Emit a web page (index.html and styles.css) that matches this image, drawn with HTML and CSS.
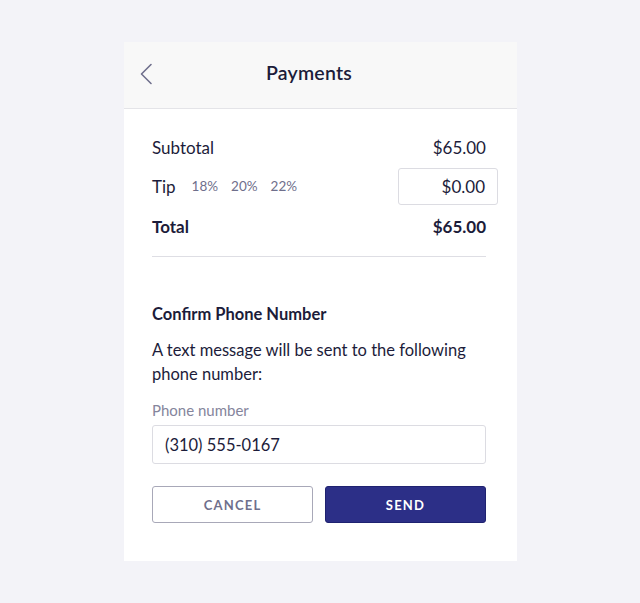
FILE: index.html
```html
<!DOCTYPE html>
<html lang="en">
<head>
  <meta charset="UTF-8">
  <meta name="viewport" content="width=device-width, initial-scale=1.0">
  <title>Payments</title>
  <link rel="stylesheet" href="styles.css">
</head>
<body>
  <div class="card">
    <div class="header">
      <button class="back" aria-label="Back">
        <svg width="14" height="22" viewBox="0 0 14 22"><path d="M12 1.5 L2.5 11 L12 20.5" fill="none" stroke="#6f6f8c" stroke-width="1.6" stroke-linecap="round" stroke-linejoin="round"/></svg>
      </button>
      <h1>Payments</h1>
    </div>

    <div class="content">
      <div class="row">
        <span>Subtotal</span>
        <span>$65.00</span>
      </div>
      <div class="row tip-row">
        <div class="tip">
          <span>Tip</span>
          <span class="pct">18%</span>
          <span class="pct">20%</span>
          <span class="pct">22%</span>
        </div>
        <div class="tip-box">$0.00</div>
      </div>
      <div class="row total">
        <span>Total</span>
        <span>$65.00</span>
      </div>

      <hr class="divider">

      <h2>Confirm Phone Number</h2>
      <p class="note">A text message will be sent to the following phone number:</p>
      <label class="label">Phone number</label>
      <div class="phone">(310) 555-0167</div>

      <div class="actions">
        <button class="btn cancel">CANCEL</button>
        <button class="btn send">SEND</button>
      </div>
    </div>
  </div>
</body>
</html>
```

FILE: styles.css
```css
body {
  margin: 0;
  background: #f3f3f8;
  font-family: 'Lato', sans-serif;
  color: #1c1c3a;
}
.card {
  width: 393px;
  margin: 42px 0 0 124px;
  background: #fff;
}
.header {
  height: 66px;
  background: #f8f8f8;
  border-bottom: 1px solid #e4e4e8;
  display: flex;
  align-items: center;
}
.back {
  border: none;
  background: none;
  padding: 0 0 3px;
  margin-left: 15px;
  display: flex;
}
.header h1 {
  flex: 1;
  margin: 0;
  padding: 0 52px 5px 0;
  text-align: center;
  font-size: 19.5px;
  font-weight: 600;
  letter-spacing: 0.2px;
}
.content {
  padding: 22px 31px 38px 28px;
}
.row {
  display: flex;
  justify-content: space-between;
  align-items: center;
  font-size: 17px;
  height: 34px;
}
.row:first-child {
  height: 32px;
}
.tip-row {
  height: 46px;
  margin-right: -12px;
}
.tip {
  display: flex;
  align-items: center;
  gap: 13px;
}
.pct {
  font-size: 13.5px;
  color: #6f6f8c;
}
.pct:nth-child(2) {
  margin-left: 3px;
}
.tip-box {
  width: 86px;
  height: 35px;
  border: 1px solid #dcdce2;
  border-radius: 3px;
  display: flex;
  align-items: center;
  justify-content: flex-end;
  padding-right: 12px;
}
.total {
  font-weight: 700;
  height: 34px;
}
.divider {
  border: none;
  border-top: 1px solid #dedee4;
  margin: 13px 0 0;
}
h2 {
  font-size: 16.5px;
  font-weight: 700;
  margin: 47px 0 0;
}
.note {
  font-size: 16.5px;
  line-height: 24px;
  margin: 14px 0 0;
}
.label {
  display: block;
  font-size: 15px;
  color: #85859c;
  margin-top: 15px;
}
.phone {
  margin-top: 6px;
  height: 37px;
  border: 1px solid #dcdce2;
  border-radius: 3px;
  display: flex;
  align-items: center;
  padding-left: 12px;
  font-size: 16.5px;
}
.actions {
  display: flex;
  gap: 12px;
  margin-top: 22px;
}
.btn {
  flex: 1;
  height: 37px;
  border-radius: 3px;
  font-family: inherit;
  font-size: 13px;
  font-weight: 700;
  letter-spacing: 1.2px;
}
.cancel {
  background: #fff;
  border: 1px solid #a8a8b8;
  color: #6f6f8c;
}
.send {
  background: #2c2f87;
  border: 1px solid #1f2270;
  color: #fff;
}
```
